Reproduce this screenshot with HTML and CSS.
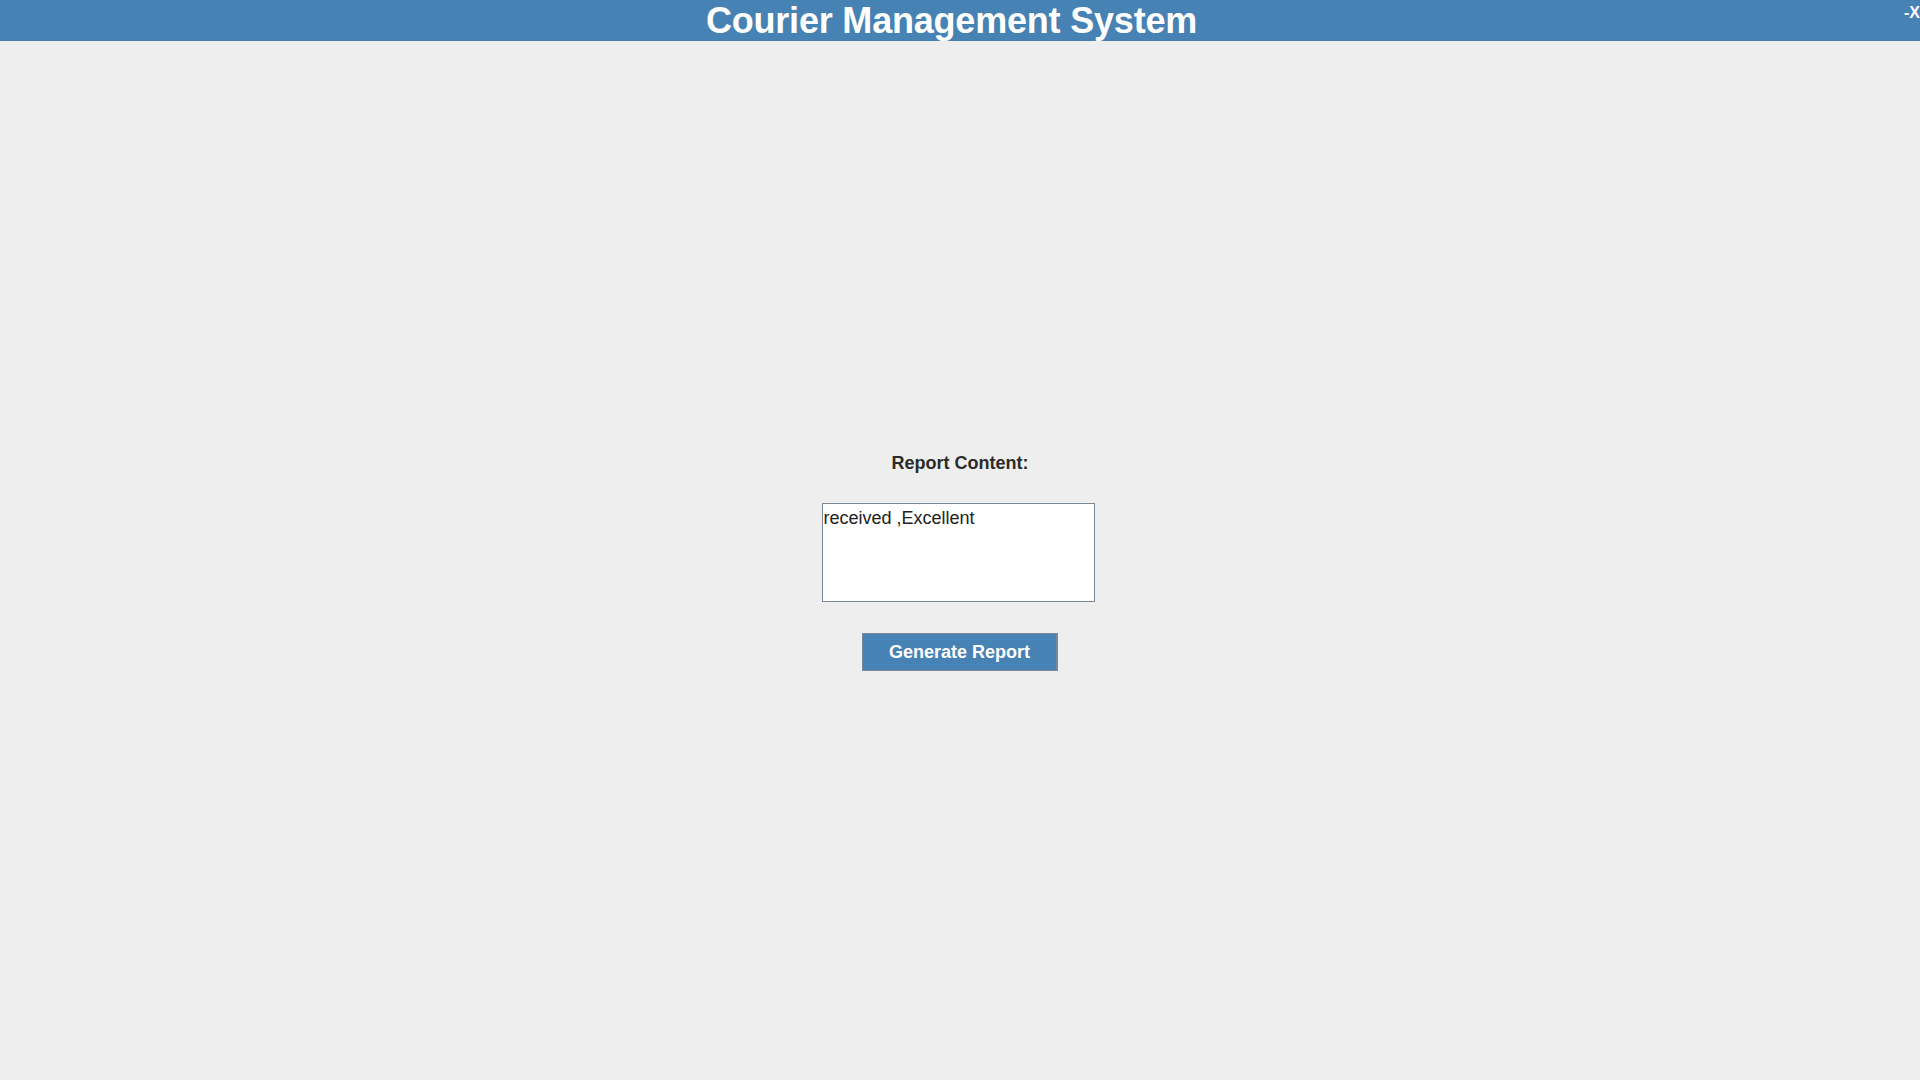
FILE: index.html
```html
<!DOCTYPE html>
<html lang="en">
<head>
<meta charset="utf-8">
<title>Courier Management System</title>
<link rel="stylesheet" href="styles.css">
</head>
<body>
<header class="topbar">
  <h1 class="title">Courier Management System</h1>
  <button class="close-btn" type="button">-X</button>
</header>
<main class="content">
  <label class="report-label" for="report">Report Content:</label>
  <textarea id="report" class="report-box">received ,Excellent</textarea>
  <button class="generate-btn" type="button">Generate Report</button>
</main>
</body>
</html>
```

FILE: styles.css
```css
html, body {
  margin: 0;
  padding: 0;
}

body {
  background: #eeeeee;
  font-family: "Liberation Sans", Arial, sans-serif;
  min-height: 100vh;
  display: flex;
  flex-direction: column;
}

.topbar {
  background: #4682b4;
  height: 41px;
  flex-shrink: 0;
  display: flex;
  align-items: flex-start;
}

.title {
  flex: 1;
  margin: 0;
  text-align: center;
  color: #ffffff;
  font-size: 36px;
  font-weight: bold;
  line-height: 41px;
  letter-spacing: -0.2px;
}

.close-btn {
  flex-shrink: 0;
  white-space: nowrap;
  background: none;
  border: none;
  color: #ffffff;
  font-family: "Liberation Sans", Arial, sans-serif;
  font-size: 16px;
  font-weight: bold;
  line-height: 18px;
  padding: 0 0 0 1px;
  margin-top: 4px;
  cursor: pointer;
}

.content {
  flex: 1;
  display: flex;
  flex-direction: column;
  align-items: center;
  justify-content: center;
  padding-top: 3px;
}

.report-label {
  font-size: 18px;
  font-weight: bold;
  color: #2b2b2b;
  line-height: 21px;
  margin-bottom: 29px;
}

.report-box {
  box-sizing: border-box;
  width: 273px;
  height: 99px;
  margin: 0 4px 0 0;
  padding: 4px 1px 2px 1px;
  border: 1px solid #7a8797;
  background: #ffffff;
  font-family: "Liberation Sans", Arial, sans-serif;
  font-size: 18px;
  color: #222222;
  resize: none;
  outline: none;
}

.generate-btn {
  box-sizing: border-box;
  margin-top: 31px;
  width: 196px;
  height: 38px;
  background: #4682b4;
  border: 1px solid #7a8797;
  border-right-width: 2px;
  color: #ffffff;
  font-family: "Liberation Sans", Arial, sans-serif;
  font-size: 18px;
  font-weight: bold;
  padding: 0;
  cursor: pointer;
}
```
